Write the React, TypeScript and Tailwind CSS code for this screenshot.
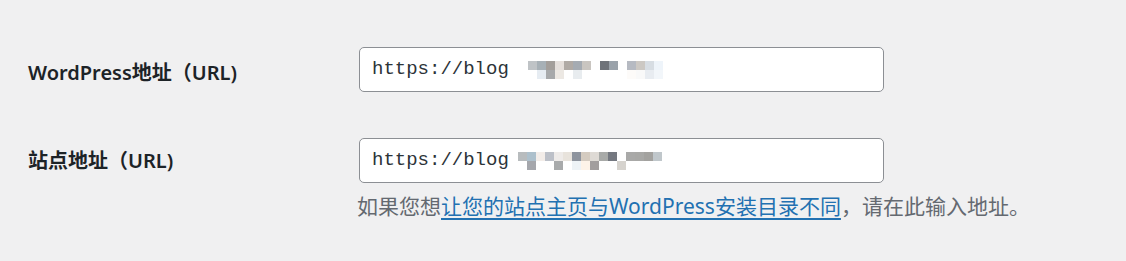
import React from "react";

type Block = [number, number, string]; // x offset, row (0/1), color

const mosaic1: Block[] = [
  [0, 0, "#bfc3c6"], [9, 0, "#a7b0b6"], [18, 0, "#a39e9a"], [27, 0, "#e5dfdb"], [36, 0, "#b0aaa5"], [45, 0, "#a5abb2"], [54, 0, "#c9c5c0"],
  [72, 0, "#6f737a"], [81, 0, "#9aa2aa"],
  [99, 0, "#b6bac2"], [108, 0, "#ccc8c3"], [117, 0, "#d7dde3"], [126, 0, "#eef4fa"],
  [9, 1, "#e6ecf2"], [18, 1, "#a7a9ab"], [27, 1, "#ece8e3"], [45, 1, "#e8ecef"],
  [99, 1, "#fdfbf9"], [108, 1, "#f9f9f9"], [117, 1, "#e8ecf1"], [126, 1, "#f2f6fa"],
];

const mosaic2: Block[] = [
  [0, 0, "#b8bcbe"], [9, 0, "#adc0cc"], [18, 0, "#f3ede9"], [27, 0, "#bcc0c8"], [36, 0, "#eeebe9"], [45, 0, "#e8e3dc"],
  [54, 0, "#8e949e"], [63, 0, "#d4cbc0"], [72, 0, "#dedad5"], [81, 0, "#a8aaa8"], [90, 0, "#747880"],
  [108, 0, "#a9a9a8"], [117, 0, "#a8a8a6"], [126, 0, "#a3a29f"], [135, 0, "#c0c7cb"],
  [9, 1, "#a5a7ac"], [36, 1, "#a8aaab"], [54, 1, "#eef3f6"], [63, 1, "#fdf3e8"], [72, 1, "#a29e9e"], [99, 1, "#d6d3ce"],
];

function Mosaic({ blocks, width }: { blocks: Block[]; width: number }) {
  return (
    <span className="relative inline-block h-[18px] align-middle" style={{ width }}>
      {blocks.map(([x, r, c], i) => (
        <span
          key={i}
          className="absolute h-[9px] w-[9px]"
          style={{ left: x, top: r * 9, background: c }}
        />
      ))}
    </span>
  );
}

const sans = "font-['Noto_Sans','Noto_Sans_CJK_SC',sans-serif]";

function Field({ blocks, gap, width }: { blocks: Block[]; gap: number; width: number }) {
  return (
    <div className="flex h-[45px] w-[525px] items-center rounded-[5px] border border-[#8c8f94] bg-white pl-[12px]">
      <span className="font-['Liberation_Mono',monospace] text-[19px] leading-none text-[#2c3338]">
        https://blog
      </span>
      <span style={{ width: gap }} className="inline-block" />
      <Mosaic blocks={blocks} width={width} />
    </div>
  );
}

export default function App() {
  return (
    <div className={`h-[261px] w-[1126px] bg-[#f0f0f1] ${sans}`}>
      <div className="pl-[28px] pt-[47px]">
        <div className="flex items-center">
          <div className="w-[331px] pt-[6px] text-[20px] font-semibold leading-[28px] text-[#1d2327]">
            WordPress地址（URL)
          </div>
          <Field blocks={mosaic1} gap={19} width={135} />
        </div>
        <div className="mt-[46px] flex items-start">
          <div className="w-[331px] pt-[9px] text-[20px] font-semibold leading-[28px] text-[#1d2327]">
            站点地址（URL)
          </div>
          <div className="flex flex-col">
            <Field blocks={mosaic2} gap={9} width={144} />
            <p className="mt-[9px] -ml-[2px] text-[21px] leading-[29px] text-[#646970]">
              如果您想
              <a className="text-[#2271b1] underline decoration-[2px] underline-offset-[4px]">
                让您的站点主页与WordPress安装目录不同
              </a>
              ，请在此输入地址。
            </p>
          </div>
        </div>
      </div>
    </div>
  );
}
